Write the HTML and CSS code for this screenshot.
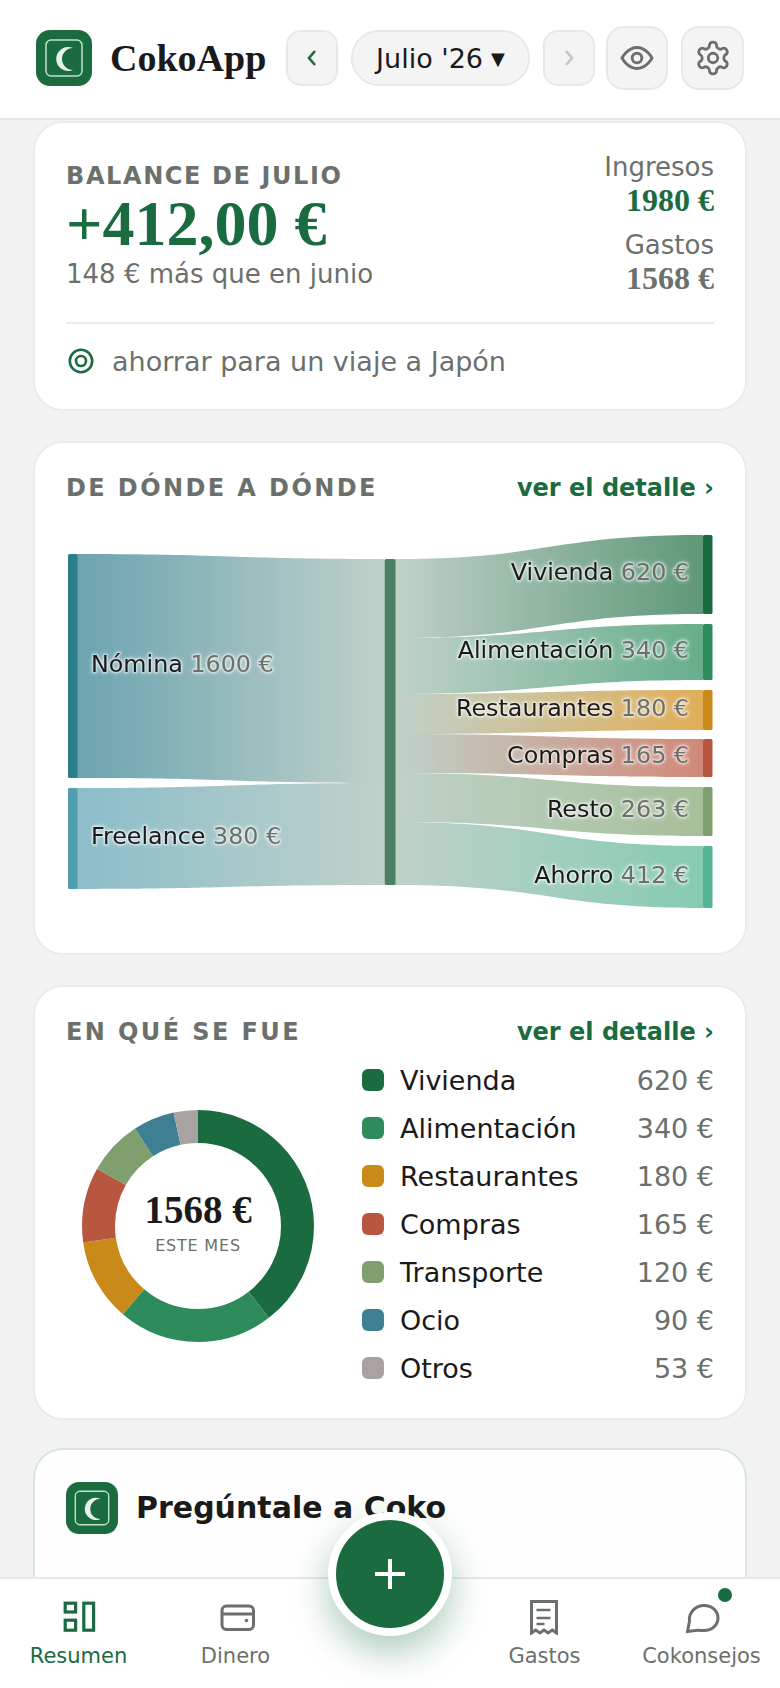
FILE: index.html
```html
<!DOCTYPE html>
<html lang="es">
<head>
<meta charset="utf-8">
<title>CokoApp</title>
<link rel="stylesheet" href="styles.css">
</head>
<body>
<svg class="defs" width="0" height="0" aria-hidden="true">
  <symbol id="logo" viewBox="0 0 56 56">
    <rect width="56" height="56" rx="14" fill="#1b6b40"/>
    <rect x="10" y="10" width="36" height="36" rx="5" fill="none" stroke="#bfe3c8" stroke-width="1.5"/>
    <path d="M37 18A12 12 0 1 0 37 40A11 11 0 0 1 37 18Z" fill="#e6f2e9"/>
  </symbol>
</svg>
<div class="app">
  <header class="topbar">
    <svg class="logo"><use href="#logo"/></svg>
    <div class="brand">CokoApp</div>
    <div class="controls">
      <button class="btn btn-nav"><svg width="16" height="22" viewBox="0 0 16 22"><path d="M11 4L5 11l6 7" fill="none" stroke="#1b6b40" stroke-width="2.6"/></svg></button>
      <button class="btn btn-month">Julio '26<span class="caret">▼</span></button>
      <button class="btn btn-nav"><svg width="16" height="22" viewBox="0 0 16 22"><path d="M5 4l6 7-6 7" fill="none" stroke="#c4c6c5" stroke-width="2.6"/></svg></button>
      <button class="btn btn-icon btn-eye"><svg width="36" height="36" viewBox="0 0 24 24" fill="none" stroke="#6b6f6d" stroke-width="1.9"><path d="M2 12s3.6-7 10-7 10 7 10 7-3.6 7-10 7-10-7-10-7Z"/><circle cx="12" cy="12" r="3.2"/></svg></button>
      <button class="btn btn-icon btn-gear"><svg width="38" height="38" viewBox="0 0 24 24" fill="none" stroke="#6b6f6d" stroke-width="1.8"><path d="M12.22 2h-.44a2 2 0 0 0-2 2v.18a2 2 0 0 1-1 1.73l-.43.25a2 2 0 0 1-2 0l-.15-.08a2 2 0 0 0-2.73.73l-.22.38a2 2 0 0 0 .73 2.73l.15.1a2 2 0 0 1 1 1.72v.51a2 2 0 0 1-1 1.74l-.15.09a2 2 0 0 0-.73 2.73l.22.38a2 2 0 0 0 2.73.73l.15-.08a2 2 0 0 1 2 0l.43.25a2 2 0 0 1 1 1.73V20a2 2 0 0 0 2 2h.44a2 2 0 0 0 2-2v-.18a2 2 0 0 1 1-1.73l.43-.25a2 2 0 0 1 2 0l.15.08a2 2 0 0 0 2.73-.73l.22-.39a2 2 0 0 0-.73-2.73l-.15-.08a2 2 0 0 1-1-1.74v-.5a2 2 0 0 1 1-1.74l.15-.09a2 2 0 0 0 .73-2.73l-.22-.38a2 2 0 0 0-2.73-.73l-.15.08a2 2 0 0 1-2 0l-.43-.25a2 2 0 0 1-1-1.73V4a2 2 0 0 0-2-2z"/><circle cx="12" cy="12" r="3"/></svg></button>
    </div>
  </header>

  <main class="content">
    <section class="card card-balance">
      <div class="balance-top">
        <div class="balance-main">
          <div class="eyebrow">BALANCE DE JULIO</div>
          <div class="balance-amount">+412,00 €</div>
          <div class="balance-note">148 € más que en junio</div>
        </div>
        <div class="balance-side">
          <div class="side-label">Ingresos</div>
          <div class="side-value side-green">1980 €</div>
          <div class="side-label side-gap">Gastos</div>
          <div class="side-value side-grey">1568 €</div>
        </div>
      </div>
      <div class="divider"></div>
      <div class="goal">
        <svg width="26" height="26" viewBox="0 0 26 26" fill="none" stroke="#1b6b40" stroke-width="2.6"><circle cx="13" cy="13" r="11.2"/><circle cx="13" cy="13" r="5"/></svg>
        <span>ahorrar para un viaje a Japón</span>
      </div>
    </section>

    <section class="card card-flow">
      <div class="card-head">
        <h2 class="eyebrow eyebrow-wide">DE DÓNDE A DÓNDE</h2>
        <a class="more">ver el detalle ›</a>
      </div>
      <svg class="sankey" width="648" height="400" viewBox="66 520 648 400">
        <defs>
          <linearGradient id="gN" gradientUnits="userSpaceOnUse" x1="77" x2="384" y1="0" y2="0"><stop offset="0" stop-color="#6ca4b0"/><stop offset="1" stop-color="#bfd1c9"/></linearGradient>
          <linearGradient id="gF" gradientUnits="userSpaceOnUse" x1="77" x2="384" y1="0" y2="0"><stop offset="0" stop-color="#8bbdc9"/><stop offset="1" stop-color="#bfd1c9"/></linearGradient>
          <linearGradient id="gV" gradientUnits="userSpaceOnUse" x1="396" x2="703" y1="0" y2="0"><stop offset="0" stop-color="#bfd1c9"/><stop offset="1" stop-color="#5f9878"/></linearGradient>
          <linearGradient id="gA" gradientUnits="userSpaceOnUse" x1="396" x2="703" y1="0" y2="0"><stop offset="0" stop-color="#bfd1c9"/><stop offset="1" stop-color="#67ae8b"/></linearGradient>
          <linearGradient id="gR" gradientUnits="userSpaceOnUse" x1="396" x2="703" y1="0" y2="0"><stop offset="0" stop-color="#bfd1c9"/><stop offset="1" stop-color="#e1ae59"/></linearGradient>
          <linearGradient id="gC" gradientUnits="userSpaceOnUse" x1="396" x2="703" y1="0" y2="0"><stop offset="0" stop-color="#bfd1c9"/><stop offset="1" stop-color="#d18878"/></linearGradient>
          <linearGradient id="gO" gradientUnits="userSpaceOnUse" x1="396" x2="703" y1="0" y2="0"><stop offset="0" stop-color="#bfd1c9"/><stop offset="1" stop-color="#a7bf99"/></linearGradient>
          <linearGradient id="gH" gradientUnits="userSpaceOnUse" x1="396" x2="703" y1="0" y2="0"><stop offset="0" stop-color="#bfd1c9"/><stop offset="1" stop-color="#86cbb1"/></linearGradient>
        </defs>
        <path fill="url(#gN)" d="M77 554C230 554 230 559 384 559V783C230 783 230 778 77 778Z"/>
        <path fill="url(#gF)" d="M77 788C230 788 230 783 384 783V885C230 885 230 889 77 889Z"/>
        <path fill="url(#gV)" d="M395 559C549 559 549 535 703 535V614C549 614 549 638 395 638Z"/>
        <path fill="url(#gA)" d="M395 638C549 638 549 624 703 624V680C549 680 549 694 395 694Z"/>
        <path fill="url(#gR)" d="M395 694C549 694 549 690 703 690V730C549 730 549 734 395 734Z"/>
        <path fill="url(#gC)" d="M395 734C549 734 549 739 703 739V777C549 777 549 773 395 773Z"/>
        <path fill="url(#gO)" d="M395 773C549 773 549 787 703 787V836C549 836 549 822 395 822Z"/>
        <path fill="url(#gH)" d="M395 822C549 822 549 846 703 846V908C549 908 549 885 395 885Z"/>
        <rect x="68" y="554" width="9.5" height="224" rx="1.5" fill="#2a7d8c"/>
        <rect x="68" y="788" width="9.5" height="101" rx="1.5" fill="#4f9fb0"/>
        <rect x="384.500" y="559" width="11" height="326" rx="1.5" fill="#4d7e66"/>
        <rect x="703" y="535" width="9.500" height="79" rx="1.5" fill="#1b6b40"/>
        <rect x="703" y="624" width="9.500" height="56" rx="1.5" fill="#2e8b5c"/>
        <rect x="703" y="690" width="9.500" height="40" rx="1.5" fill="#c98a1a"/>
        <rect x="703" y="739" width="9.500" height="38" rx="1.5" fill="#b85640"/>
        <rect x="703" y="787" width="9.500" height="49" rx="1.5" fill="#7fa06e"/>
        <rect x="703" y="846" width="9.500" height="62" rx="1.5" fill="#55b593"/>
        <text class="s-label" x="91" y="672">Nómina <tspan class="s-val">1600 €</tspan></text>
        <text class="s-label" x="91" y="844">Freelance <tspan class="s-val">380 €</tspan></text>
        <text class="s-label s-end" x="689" y="580">Vivienda <tspan class="s-val">620 €</tspan></text>
        <text class="s-label s-end" x="689" y="658">Alimentación <tspan class="s-val">340 €</tspan></text>
        <text class="s-label s-end" x="689" y="716">Restaurantes <tspan class="s-val">180 €</tspan></text>
        <text class="s-label s-end" x="689" y="763">Compras <tspan class="s-val">165 €</tspan></text>
        <text class="s-label s-end" x="689" y="817">Resto <tspan class="s-val">263 €</tspan></text>
        <text class="s-label s-end" x="689" y="883">Ahorro <tspan class="s-val">412 €</tspan></text>
      </svg>
    </section>

    <section class="card card-spend">
      <div class="card-head">
        <h2 class="eyebrow eyebrow-wide">EN QUÉ SE FUE</h2>
        <a class="more">ver el detalle ›</a>
      </div>
      <div class="spend-body">
        <svg class="donut" width="264" height="264" viewBox="0 0 264 264">
          <g transform="rotate(-90 132 132)" fill="none" stroke-width="33">
            <circle cx="132" cy="132" r="99.5" pathLength="1568" stroke="#1b6b40" stroke-dasharray="620 948" stroke-dashoffset="0"/>
            <circle cx="132" cy="132" r="99.5" pathLength="1568" stroke="#2e8b5c" stroke-dasharray="340 1228" stroke-dashoffset="-620"/>
            <circle cx="132" cy="132" r="99.5" pathLength="1568" stroke="#c98a1a" stroke-dasharray="180 1388" stroke-dashoffset="-960"/>
            <circle cx="132" cy="132" r="99.5" pathLength="1568" stroke="#b85640" stroke-dasharray="165 1403" stroke-dashoffset="-1140"/>
            <circle cx="132" cy="132" r="99.5" pathLength="1568" stroke="#7fa06e" stroke-dasharray="120 1448" stroke-dashoffset="-1305"/>
            <circle cx="132" cy="132" r="99.5" pathLength="1568" stroke="#3f7f93" stroke-dasharray="90 1478" stroke-dashoffset="-1425"/>
            <circle cx="132" cy="132" r="99.5" pathLength="1568" stroke="#a8a3a1" stroke-dasharray="53 1515" stroke-dashoffset="-1515"/>
          </g>
          <text class="donut-total" x="132" y="129">1568 €</text>
          <text class="donut-sub" x="132" y="157">ESTE MES</text>
        </svg>
        <ul class="legend">
          <li class="legend-row"><i class="dot dot-1"></i><span class="legend-name">Vivienda</span><span class="legend-val">620 €</span></li>
          <li class="legend-row"><i class="dot dot-2"></i><span class="legend-name">Alimentación</span><span class="legend-val">340 €</span></li>
          <li class="legend-row"><i class="dot dot-3"></i><span class="legend-name">Restaurantes</span><span class="legend-val">180 €</span></li>
          <li class="legend-row"><i class="dot dot-4"></i><span class="legend-name">Compras</span><span class="legend-val">165 €</span></li>
          <li class="legend-row"><i class="dot dot-5"></i><span class="legend-name">Transporte</span><span class="legend-val">120 €</span></li>
          <li class="legend-row"><i class="dot dot-6"></i><span class="legend-name">Ocio</span><span class="legend-val">90 €</span></li>
          <li class="legend-row"><i class="dot dot-7"></i><span class="legend-name">Otros</span><span class="legend-val">53 €</span></li>
        </ul>
      </div>
    </section>

    <section class="card card-ask">
      <svg class="logo-small"><use href="#logo"/></svg>
      <h2 class="ask-title">Pregúntale a Coko</h2>
    </section>
  </main>

  <nav class="tabbar">
    <a class="tab tab-active">
      <svg width="34" height="34" viewBox="0 0 34 34" fill="none" stroke="#1b6b40" stroke-width="3.2"><rect x="3.200" y="2.200" width="10.400" height="8.800"/><rect x="3.200" y="19.200" width="10.400" height="10"/><rect x="21.800" y="2.200" width="9.800" height="27"/></svg>
      <span>Resumen</span>
    </a>
    <a class="tab">
      <svg width="38" height="34" viewBox="0 0 38 34" fill="none" stroke="#6b6f6d" stroke-width="3"><rect x="5" y="5" width="31.500" height="23.500" rx="4.500"/><path d="M5 13h31.500"/><circle cx="29.500" cy="19.500" r="1.800" fill="#6b6f6d" stroke="none"/></svg>
      <span>Dinero</span>
    </a>
    <div class="tab tab-spacer"></div>
    <a class="tab">
      <svg width="30" height="38" viewBox="0 0 30 38" fill="none" stroke="#6b6f6d" stroke-width="3"><path d="M1.500 4.500h25V36l-4.200-3-4.200 3-4.100-3-4.100 3-4.200-3-4.200 3Z"/><path class="receipt-lines" d="M6.500 13h14M6.500 21h14M6.500 27h8"/></svg>
      <span>Gastos</span>
    </a>
    <a class="tab">
      <svg width="38" height="34" viewBox="0 0 38 34" fill="none" stroke="#6b6f6d" stroke-width="3"><path d="M4.500 30.500L6.500 20C5.500 11 13 4.500 21 4.500 29 4.500 35 10 35 17 35 24 29 29.500 21 29.500 17.500 29.500 15 29 12 29.500Z"/></svg>
      <span>Cokonsejos</span>
      <i class="tab-dot"></i>
    </a>
  </nav>

  <button class="fab"><svg width="34" height="34" viewBox="0 0 34 34"><path d="M17 2v30M2 17h30" stroke="#fff" stroke-width="4"/></svg></button>
</div>
</body>
</html>
```

FILE: styles.css
```css
* { box-sizing: border-box; }
html, body { margin: 0; padding: 0; }
body {
  width: 780px;
  height: 1688px;
  overflow: hidden;
  background: #f2f2f2;
  color: #1a1a1a;
  font-family: "DejaVu Sans", sans-serif;
}
.defs { position: absolute; }
.app { position: relative; width: 780px; height: 1688px; display: flex; flex-direction: column; overflow: hidden; }

.topbar {
  flex: none;
  height: 120px;
  background: #fff;
  border-bottom: 2px solid #e8e8e8;
  display: flex;
  align-items: center;
  padding: 0 36px 2px 36px;
}
.logo { width: 56px; height: 56px; flex: none; }
.brand {
  margin-left: 18px;
  font: bold 38px/44px "Liberation Serif", serif;
  flex: none;
}
.controls { margin-left: auto; display: flex; align-items: center; gap: 13px; }
.btn {
  background: #f3f4f3;
  border: 2px solid #e8e8e8;
  padding: 0;
  display: flex;
  align-items: center;
  justify-content: center;
  color: #1a1a1a;
  font-family: "DejaVu Sans", sans-serif;
}
.btn-nav { width: 52px; height: 56px; border-radius: 15px; }
.btn-month { width: 179px; height: 56px; border-radius: 28px; font-size: 27px; gap: 8px; white-space: pre; }
.caret { font-size: 18px; }
.btn-icon { width: 62px; height: 64px; border-radius: 18px; }
.btn-eye { margin-left: -2px; }
.btn-gear { width: 63px; }

.content {
  flex: 1;
  min-height: 0;
  overflow: hidden;
  display: flex;
  flex-direction: column;
  gap: 30px;
  padding: 1px 33px 0;
}
.card {
  flex: none;
  background: #fff;
  border: 2px solid #ebebeb;
  border-radius: 30px;
  padding: 28px 31px;
}

.eyebrow {
  margin: 0;
  font: bold 24px/30px "DejaVu Sans", sans-serif;
  color: #6b706d;
  letter-spacing: 1.6px;
}
.eyebrow-wide { letter-spacing: 2.4px; }

.card-balance { height: 290px; padding-bottom: 26px; }
.balance-top { display: flex; justify-content: space-between; height: 144px; }
.balance-main { padding-top: 10px; }
.balance-amount {
  margin-top: 3px;
  font: bold 64px/60px "Liberation Serif", serif;
  color: #1b6b40;
}
.balance-note { margin-top: 4px; font-size: 26px; line-height: 32px; color: #6b706d; }
.balance-side { text-align: right; }
.side-label { font-size: 26px; line-height: 32px; color: #6b706d; }
.side-gap { margin-top: 12px; }
.side-value { font: bold 32px/34px "Liberation Serif", serif; }
.side-green { color: #1b6b40; }
.side-grey { color: #6b706d; }
.divider { height: 2px; background: #ebebeb; margin-top: 27px; }
.goal { margin-top: 19px; height: 36px; display: flex; align-items: center; gap: 18px; font-size: 27px; color: #6b706d; padding-left: 2px; }

.card-head { display: flex; justify-content: space-between; align-items: center; height: 30px; }
.more { font-size: 24px; font-weight: bold; color: #1b6b40; }

.card-flow { height: 513.500px; padding-top: 30px; }
.sankey { display: block; margin-top: 17px; }
.s-label {
  font: 23.800px "DejaVu Sans", sans-serif;
  fill: #1a1a1a;
  stroke: rgba(255, 255, 255, 0.3);
  stroke-width: 3px;
  stroke-linejoin: round;
  paint-order: stroke;
  filter: drop-shadow(0 0 2px rgba(255, 255, 255, 0.85));
}
.s-end { text-anchor: end; }
.s-val { fill: #6b706d; }

.card-spend { height: 435px; padding-top: 30px; }
.spend-body { display: flex; align-items: center; gap: 32px; margin-top: 9.500px; }
.donut { display: block; flex: none; margin-top: 4px; }
.donut-total { font: bold 39px "Liberation Serif", serif; fill: #1a1a1a; text-anchor: middle; }
.donut-sub { font: 16px "DejaVu Sans", sans-serif; fill: #6b706d; text-anchor: middle; letter-spacing: 0.8px; }
.legend { list-style: none; margin: 0; padding: 0; flex: 1; }
.legend-row { display: flex; align-items: center; height: 48px; font-size: 27px; }
.legend-name { margin-left: 16px; flex: 1; }
.legend-val { color: #6b706d; }
.dot { width: 22px; height: 22px; border-radius: 6px; flex: none; }
.dot-1 { background: #1b6b40; }
.dot-2 { background: #2e8b5c; }
.dot-3 { background: #c98a1a; }
.dot-4 { background: #b85640; }
.dot-5 { background: #7fa06e; }
.dot-6 { background: #3f7f93; }
.dot-7 { background: #a8a3a1; }

.card-ask {
  height: 300px;
  margin-top: -1.500px;
  background: #fdfefd;
  border-color: #d6e6df;
  padding: 31.500px 31px;
  display: flex;
  align-items: flex-start;
  gap: 18px;
}
.logo-small { width: 52px; height: 52px; flex: none; }
.ask-title { margin: 9px 0 0; font-size: 30px; line-height: 34px; font-weight: bold; }

.tabbar {
  position: absolute;
  left: 0;
  right: 0;
  bottom: 0;
  height: 111px;
  background: #fff;
  border-top: 2px solid #e8e8e8;
  display: grid;
  grid-template-columns: 157px 157px 152px 157px 157px;
}
.tab {
  position: relative;
  display: flex;
  flex-direction: column;
  align-items: center;
  justify-content: flex-end;
  gap: 8px;
  height: 90px;
  font-size: 21px;
  line-height: 26px;
  color: #6b706d;
}
.tab-active { color: #1b6b40; }
.receipt-lines { stroke-width: 2.500px; }
.tab-dot {
  position: absolute;
  left: 95px;
  top: 9px;
  width: 14px;
  height: 14px;
  border-radius: 50%;
  background: #1b6b40;
}
.fab {
  position: absolute;
  left: 328px;
  top: 1512px;
  width: 124px;
  height: 124px;
  border-radius: 50%;
  border: 8px solid #fff;
  background: #1b6b40;
  padding: 0;
  display: flex;
  align-items: center;
  justify-content: center;
  box-shadow: 0 16px 36px rgba(27, 107, 64, 0.35);
}
```
